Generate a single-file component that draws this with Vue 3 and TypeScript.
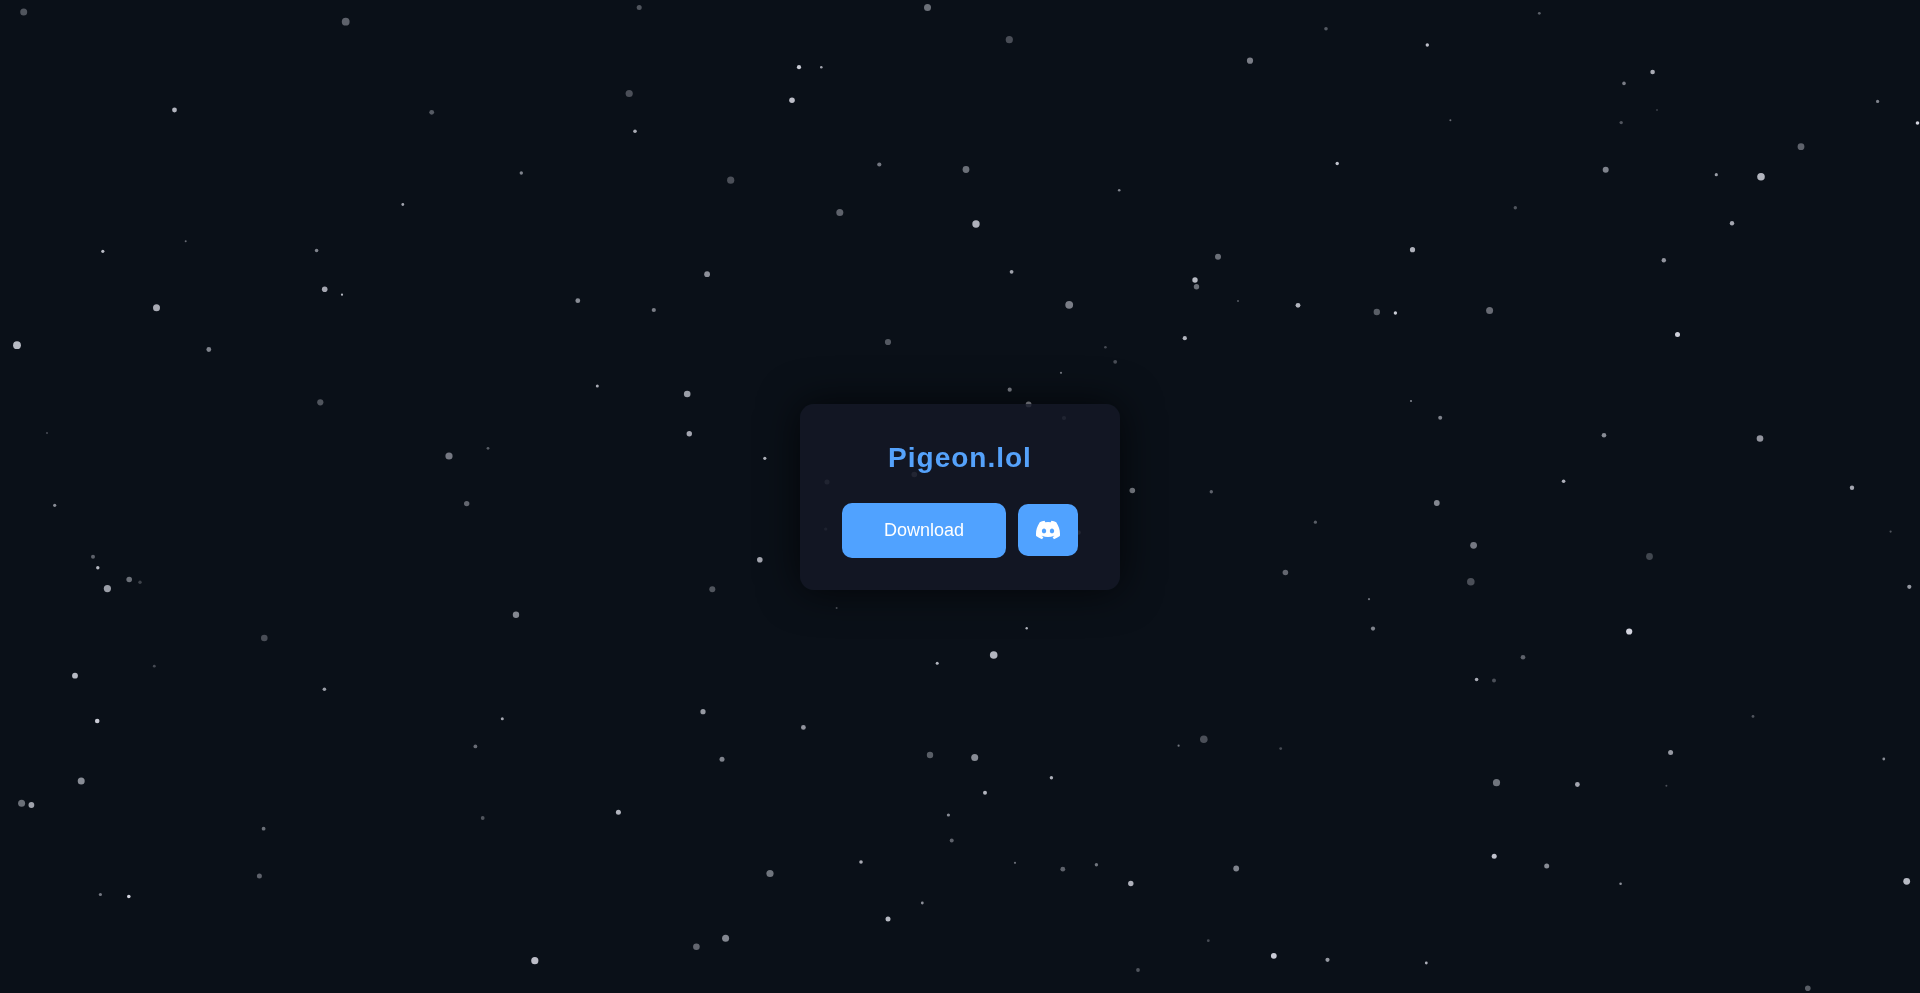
<script setup lang="ts">
// Each star: x, y, radius, opacity on a 1920 x 993 canvas.
type Star = [number, number, number, number]

const stars: Star[] = [
  [23.7, 12, 3.5, 0.3], [345.7, 21.7, 3.9, 0.36], [174.5, 110, 2.4, 0.72], [431.7, 112.3, 2.4, 0.33],
  [402.8, 204.5, 1.4, 0.65], [185.7, 241.2, 1, 0.4], [102.8, 251.3, 1.6, 0.75], [316.6, 250.5, 1.8, 0.5],
  [324.7, 289.3, 2.8, 0.66], [342, 294.7, 1.1, 0.75], [156.5, 307.8, 3.5, 0.68], [17, 345.2, 3.9, 0.74],
  [208.8, 349.5, 2.4, 0.5], [320.3, 402.3, 3.1, 0.3], [47, 433, 1.1, 0.25], [449, 456, 3.6, 0.46],
  [639.2, 7.5, 2.5, 0.3], [927.5, 7.5, 3.5, 0.42], [799, 67.2, 2.1, 0.82], [821.3, 67.3, 1.3, 0.65],
  [629.2, 93.5, 3.6, 0.28], [792, 100.2, 2.8, 0.76], [635, 131.3, 1.8, 0.68], [521.3, 173, 1.7, 0.5],
  [879.3, 164.5, 2.1, 0.45], [730.7, 180.2, 3.6, 0.28], [839.8, 212.5, 3.5, 0.36], [707.1, 274.2, 2.9, 0.56],
  [577.8, 300.7, 2.4, 0.54], [653.8, 310, 2.1, 0.48], [888, 342, 3.1, 0.32], [597.3, 386, 1.5, 0.68],
  [687.2, 394, 3.3, 0.62], [689.3, 433.8, 2.7, 0.66], [488, 448.3, 1.4, 0.34], [764.8, 458.3, 1.6, 0.72],
  [827, 482, 2.5, 0.4], [914.3, 474.5, 2.8, 0.45],
  [1009.3, 39.7, 3.6, 0.27], [1326, 28.7, 1.8, 0.32], [1427.3, 45, 1.7, 0.76], [1250, 60.7, 3.1, 0.48],
  [966, 169.5, 3.4, 0.42], [1119.2, 190.3, 1.3, 0.5], [1337.2, 163.5, 1.7, 0.78], [976, 224, 3.7, 0.7],
  [1011.6, 271.8, 1.9, 0.64], [1218, 256.7, 3, 0.42], [1412.5, 249.7, 2.6, 0.7], [1195, 280, 2.7, 0.74],
  [1196.5, 286.7, 2.7, 0.42], [1069.2, 304.8, 3.9, 0.48], [1238, 301, 1.1, 0.3], [1298, 305.3, 2.4, 0.72],
  [1376.8, 312, 3.2, 0.34], [1395.4, 313, 1.7, 0.82], [1184.8, 338.2, 2.1, 0.72], [1105.4, 347.3, 1.3, 0.26],
  [1115.2, 361.8, 1.9, 0.27], [1061, 372.8, 1.1, 0.46], [1009.7, 389.7, 2.1, 0.5], [1028.6, 404.4, 2.9, 0.6],
  [1064, 418, 2.1, 0.4], [1411, 401, 1.1, 0.5], [1132.3, 490.5, 2.8, 0.52], [1211.3, 491.7, 1.7, 0.36],
  [1539.3, 13.3, 1.4, 0.35], [1652.6, 72, 2.3, 0.68], [1624, 83.4, 1.8, 0.48], [1657, 110, 1, 0.2],
  [1450.4, 120.2, 1, 0.4], [1621.2, 122.6, 1.7, 0.3], [1877.6, 101.4, 1.6, 0.5], [1917.5, 123, 1.8, 0.86],
  [1801, 146.7, 3.4, 0.36], [1605.7, 169.8, 3, 0.5], [1716.3, 174.7, 1.6, 0.62], [1761, 176.8, 3.8, 0.72],
  [1515.3, 207.8, 1.7, 0.3], [1732, 223.2, 2.2, 0.66], [1663.8, 260.2, 2.2, 0.58], [1489.6, 310.5, 3.5, 0.4],
  [1677.5, 334.5, 2.5, 0.84], [1440.2, 417.8, 2, 0.5], [1604, 435.2, 2.3, 0.54], [1760, 438.5, 3.3, 0.58],
  [1563.6, 481.3, 1.8, 0.7], [1852, 487.8, 2.2, 0.66],
  [54.7, 505.3, 1.6, 0.54], [466.7, 503.6, 2.7, 0.38], [93, 556.7, 2, 0.36], [97.8, 567.7, 1.7, 0.74],
  [129.2, 579.5, 2.8, 0.42], [140, 582.3, 1.7, 0.22], [107.4, 588.6, 3.6, 0.62], [264.3, 638, 3.3, 0.27],
  [154.3, 666.2, 1.4, 0.26], [75, 675.7, 2.9, 0.74], [324.4, 689.3, 1.8, 0.62], [97.2, 721, 2.3, 0.82],
  [475.4, 746.4, 1.9, 0.4], [81.2, 781, 3.5, 0.54], [21.6, 803.3, 3.5, 0.42], [31.4, 805, 2.9, 0.64],
  [263.6, 828.7, 1.9, 0.42], [259.4, 876, 2.5, 0.36], [100.4, 894.5, 1.6, 0.46], [128.8, 896.5, 1.8, 0.86],
  [825.7, 529, 1.6, 0.35], [759.8, 559.8, 2.8, 0.66], [712.3, 589.2, 3, 0.3], [516, 614.8, 3.2, 0.52],
  [836.6, 608, 1, 0.3], [937.2, 663.3, 1.5, 0.72], [703, 711.7, 2.6, 0.6], [502.3, 718.8, 1.5, 0.66],
  [803.4, 727.4, 2.4, 0.58], [930, 755, 3.2, 0.34], [722, 759.3, 2.5, 0.5], [482.7, 818, 1.9, 0.3],
  [618.4, 812.3, 2.5, 0.72], [948.4, 815, 1.6, 0.54], [951.7, 840.4, 2, 0.36], [861, 862, 1.8, 0.68],
  [770, 873.5, 3.6, 0.44], [922.3, 903, 1.4, 0.56], [888, 919, 2.5, 0.74], [725.6, 938.3, 3.5, 0.52],
  [696.4, 946.7, 3.3, 0.38], [534.8, 960.7, 3.6, 0.76],
  [1078.5, 532.5, 2.3, 0.5], [1436.8, 503, 2.9, 0.52], [1315.4, 522.2, 1.6, 0.34], [1285.4, 572.5, 2.8, 0.38],
  [1369, 599.2, 1.1, 0.42], [1373, 628.6, 2.1, 0.5], [1026.7, 628.2, 1.2, 0.72], [993.7, 655, 3.8, 0.72],
  [1203.8, 739.3, 3.8, 0.28], [1178.6, 745.7, 1.1, 0.44], [1280.7, 748.6, 1.4, 0.26], [974.7, 757.5, 3.5, 0.54],
  [1051.4, 777.7, 1.7, 0.7], [985, 792.7, 2, 0.72], [1015, 862.8, 1.1, 0.42], [1062.8, 869.2, 2.4, 0.36],
  [1096.4, 864.8, 1.7, 0.44], [1130.8, 883.5, 2.7, 0.7], [1236.2, 868.5, 2.9, 0.5], [1208.3, 940.7, 1.4, 0.26],
  [1138, 970, 1.9, 0.3], [1273.8, 955.8, 2.9, 0.82], [1327.5, 959.8, 2.1, 0.6], [1426.3, 963, 1.4, 0.7],
  [1890.6, 531.6, 1.1, 0.3], [1473.6, 545.3, 3.4, 0.46], [1649.5, 556.5, 3.4, 0.24], [1470.8, 581.8, 3.8, 0.28],
  [1909.3, 586.8, 2.1, 0.6], [1629.2, 631.5, 3.1, 0.86], [1523, 657.3, 2.3, 0.36], [1476.6, 679.5, 1.8, 0.68],
  [1494, 680.4, 2, 0.28], [1753, 716.4, 1.4, 0.3], [1670.6, 752.5, 2.5, 0.6], [1883.8, 759, 1.4, 0.54],
  [1496.5, 782.7, 3.6, 0.44], [1577.4, 784.5, 2.4, 0.66], [1666.4, 785.8, 1, 0.28], [1494.2, 856.3, 2.5, 0.78],
  [1546.7, 866, 2.5, 0.54], [1620.6, 883.7, 1.3, 0.56], [1906.7, 881.3, 3.4, 0.74], [1807.8, 988.3, 2.8, 0.34],
]
</script>

<template>
  <main class="page">
    <svg class="sky" viewBox="0 0 1920 993" preserveAspectRatio="xMidYMid slice" aria-hidden="true">
      <circle
        v-for="([x, y, r, o], i) in stars"
        :key="i"
        :cx="x"
        :cy="y"
        :r="r"
        :fill-opacity="o"
      />
    </svg>

    <section class="card">
      <h1 class="title">Pigeon.lol</h1>
      <div class="actions">
        <button type="button" class="btn download">Download</button>
        <a class="btn discord" href="#discord" aria-label="Discord">
          <svg class="icon" viewBox="0 0 24 24" aria-hidden="true">
            <path
              d="M20.317 4.37a19.791 19.791 0 0 0-4.885-1.515.074.074 0 0 0-.079.037c-.21.375-.444.864-.608 1.25a18.27 18.27 0 0 0-5.487 0 12.64 12.64 0 0 0-.617-1.25.077.077 0 0 0-.079-.037A19.736 19.736 0 0 0 3.677 4.37a.07.07 0 0 0-.032.027C.533 9.046-.32 13.58.099 18.057a.082.082 0 0 0 .031.057 19.9 19.9 0 0 0 5.993 3.03.078.078 0 0 0 .084-.028 14.09 14.09 0 0 0 1.226-1.994.076.076 0 0 0-.041-.106 13.107 13.107 0 0 1-1.872-.892.077.077 0 0 1-.008-.128 10.2 10.2 0 0 0 .372-.292.074.074 0 0 1 .077-.01c3.928 1.793 8.18 1.793 12.062 0a.074.074 0 0 1 .078.01c.12.098.246.198.373.292a.077.077 0 0 1-.006.127 12.299 12.299 0 0 1-1.873.892.077.077 0 0 0-.041.107c.36.698.772 1.362 1.225 1.993a.076.076 0 0 0 .084.028 19.839 19.839 0 0 0 6.002-3.03.077.077 0 0 0 .032-.054c.5-5.177-.838-9.674-3.549-13.66a.061.061 0 0 0-.031-.03zM8.02 15.33c-1.183 0-2.157-1.085-2.157-2.419 0-1.333.956-2.419 2.157-2.419 1.21 0 2.176 1.096 2.157 2.42 0 1.333-.956 2.418-2.157 2.418zm7.975 0c-1.183 0-2.157-1.085-2.157-2.419 0-1.333.955-2.419 2.157-2.419 1.21 0 2.176 1.096 2.157 2.42 0 1.333-.946 2.418-2.157 2.418z"
            />
          </svg>
        </a>
      </div>
    </section>
  </main>
</template>

<style>
body {
  margin: 0;
  background: #0a1018;
}
</style>

<style scoped>
.page {
  display: flex;
  align-items: center;
  justify-content: center;
  min-height: 100vh;
  font-family: "Liberation Sans", Arial, sans-serif;
}

.sky {
  position: fixed;
  inset: 0;
  width: 100%;
  height: 100%;
  fill: #f4f5ff;
}

.card {
  position: relative;
  box-sizing: border-box;
  min-width: 320px;
  padding: 38px 40px 32px;
  border-radius: 14px;
  background: rgba(20, 24, 38, 0.85);
  box-shadow: 0 0 40px rgba(0, 0, 0, 0.7);
  text-align: center;
}

.title {
  margin: 0 0 29px;
  color: #55a2fb;
  font-size: 28px;
  line-height: 32px;
  letter-spacing: 1px;
}

.actions {
  display: flex;
  align-items: center;
  justify-content: center;
  gap: 12px;
}

.btn {
  border: 0;
  border-radius: 10px;
  background: #50a2ff;
  color: #fff;
  cursor: pointer;
}

.download {
  padding: 17px 42px;
  font-family: inherit;
  font-size: 18px;
  line-height: 21px;
}

.discord {
  display: flex;
  padding: 14px 18px;
}

.icon {
  width: 24px;
  height: 24px;
  fill: currentColor;
}
</style>
